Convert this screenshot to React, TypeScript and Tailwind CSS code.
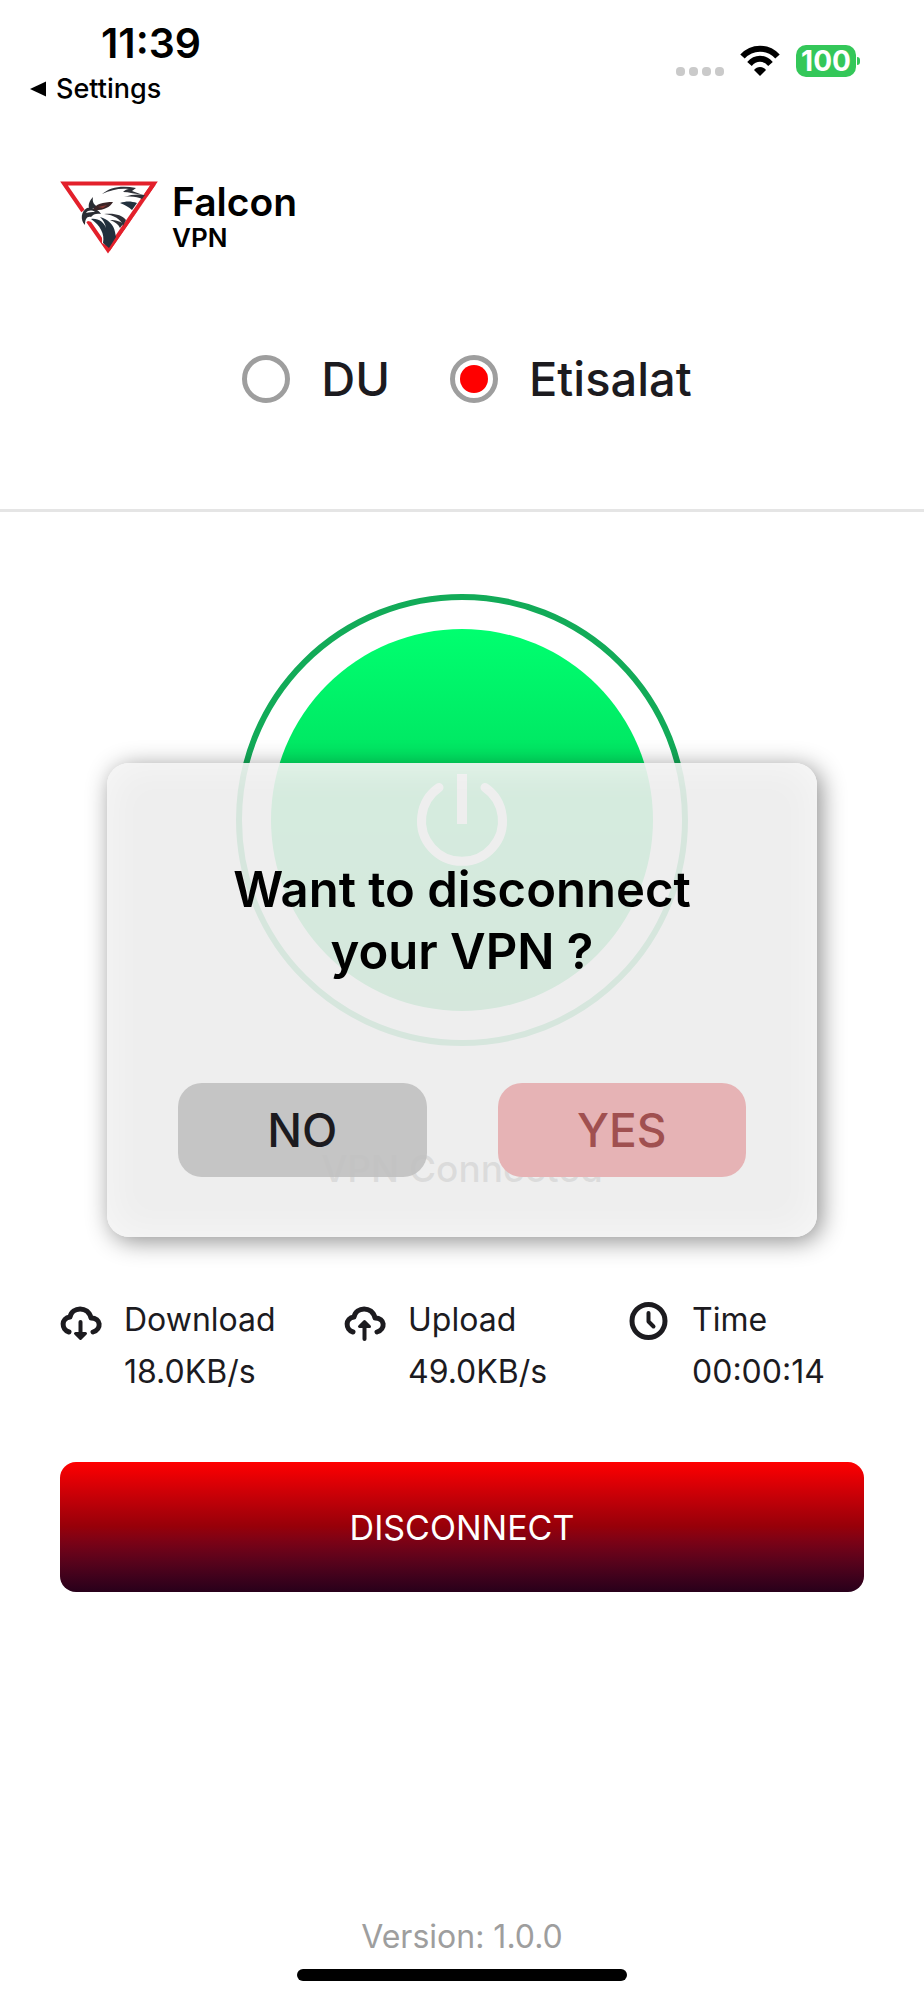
import { useState } from "react";

const STATS = [
  { id: "download", label: "Download", value: "18.0KB/s" },
  { id: "upload", label: "Upload", value: "49.0KB/s" },
  { id: "time", label: "Time", value: "00:00:14" },
];

const PROVIDERS = ["DU", "Etisalat"];

function WifiIcon() {
  return (
    <svg className="h-8 w-10" fill="none" stroke="#000" strokeWidth="6" viewBox="0 0 40 32">
      <title>Wi-Fi</title>
      <path d="M2.5 11.5C12 1 28 1 37.5 11.5" />
      <path d="M9.5 19C15.5 12 24.5 12 30.5 19" />
      <path d="M20 31l-6-6c3-4 9-4 12 0z" fill="#000" stroke="none" />
    </svg>
  );
}

function FalconLogo() {
  return (
    <svg className="h-[76px] w-[98px]" fill="none" viewBox="0 0 98 76">
      <title>Falcon VPN</title>
      <path d="M23 31L4 3.500h90L48 70 28 41" stroke="#e3202b" strokeWidth="4" />
      <path
        d="M25 29c1-5 4-9 9-12 9-7 26-13 45-8l9 8-38 50-8-4c1-9-3-16-10-21l-8-2c-2-5-1-8 1-11z"
        fill="#fff"
      />
      <path d="M94 3.500L48 70" stroke="#e3202b" strokeWidth="4" />
      {/* beak */}
      <path
        d="M25 45c-5-5-4-14 2-17 5-1 11 1 14 6-4-1-8 0-10 3-4-1-6 2-6 8z"
        fill="#2a2d33"
      />
      <path d="M26 33c2-3 6-3 9-1-3 0-6 0-9 1z" fill="#fff" />
      {/* brow and eye */}
      <path d="M29 28c-1-4 1-8 4-11-1 5 1 8 5 10l-3 1z" fill="#2a2d33" />
      <path d="M33 30c2-6 10-8 20-8-3 6-12 9-20 8z" fill="#3b2527" />
      <path d="M38 27l9-2-4 3z" fill="#8b3a35" />
      {/* neck feathers */}
      <path d="M31 39c7-1 13 3 15 9-1-5-3-8-6-11 8 2 14 8 15 15l1 5-7 11-6-5c2-9-3-18-12-24z" fill="#22303d" />
      <path d="M44 34c10 1 17 5 19 12l3-6c-4-5-11-7-22-6z" fill="#2e3138" />
      <path d="M50 40c5 2 8 4 10 8l3-4c-3-3-7-4-13-4z" fill="#2e3138" />
      <path d="M60 23c5 2 9 4 12 7l5-7c-6-2-11-2-17 0z" fill="#22303d" />
      <path d="M64 17c8-1 14 0 18 2l3-4c-6-1-13-1-21 2z" fill="#2e3138" />
      {/* crest */}
      <path d="M42 14c8-7 20-9 34-6l-4 3 11 4c-8-1-14-3-20-3 2-2 4-3 6-3-10-1-18 1-27 5z" fill="#2e3138" />
    </svg>
  );
}

function PowerIcon() {
  return (
    <svg className="h-24 w-24" fill="none" stroke="#fff" strokeWidth="9" viewBox="0 0 96 96">
      <title>Power</title>
      <path d="M25 15.5a40.5 40.5 0 1 0 46 0" strokeLinecap="round" />
      <path d="M48 2v50" strokeWidth="10" />
    </svg>
  );
}

function StatIcon({ id }: { id: string }) {
  return (
    <svg
      className="mt-2 h-10 w-11 shrink-0"
      fill="none"
      stroke="#1c1b1f"
      strokeLinecap="round"
      strokeLinejoin="round"
      strokeWidth="4"
      viewBox="0 0 44 40"
    >
      {id === "time" ? (
        <>
          <circle cx="20.5" cy="19" r="16.5" strokeWidth="5" />
          <path d="M20.5 11v8.500l5 5" />
        </>
      ) : (
        <path d="M9 30C1 27.500 1 16 10 15 12 4.500 28 3.500 31 16c10 0 11 11 2 14" strokeWidth="5" />
      )}
      {id === "download" && (
        <>
          <path d="M20.500 20v13" />
          <path d="M15.500 31.500h10l-5 5z" fill="#1c1b1f" strokeWidth="3" />
        </>
      )}
      {id === "upload" && (
        <>
          <path d="M20.500 37V23" />
          <path d="M15.500 24.500h10l-5-5z" fill="#1c1b1f" strokeWidth="3" />
        </>
      )}
    </svg>
  );
}

function StatusBar() {
  return (
    <div className="flex items-start justify-between pr-16 pl-7 text-black">
      <div className="pt-[23px]">
        <p className="pl-[73px] font-semibold text-[41px] leading-10">11:39</p>
        <button className="mt-[10px] flex items-center gap-2 font-medium text-[27px] leading-8" type="button">
          <svg className="h-4 w-5" viewBox="0 0 20 16">
            <path d="M2 8L18 0.5v15z" />
          </svg>
          Settings
        </button>
      </div>
      <div className="flex items-center pt-[45px]">
        <div className="mt-5 mr-4 flex gap-1">
          <span className="size-[9px] rounded-sm bg-[#cacaca]" />
          <span className="size-[9px] rounded-sm bg-[#cacaca]" />
          <span className="size-[9px] rounded-sm bg-[#cacaca]" />
          <span className="size-[9px] rounded-sm bg-[#cacaca]" />
        </div>
        <WifiIcon />
        <span className="ml-4 flex h-8 w-15 items-center justify-center rounded-[10px] bg-[#34c759] font-bold text-[28px] text-white">
          100
        </span>
        <span className="ml-px h-2 w-[3px] rounded-r-full bg-[#34c759]" />
      </div>
    </div>
  );
}

export default function App() {
  const [provider, setProvider] = useState("Etisalat");
  const [isDialogOpen, setIsDialogOpen] = useState(true);

  return (
    <div className="relative flex min-h-screen flex-col bg-white font-['Inter',sans-serif] text-[#1c1b1f]">
      <StatusBar />

      <header className="mt-[75px] flex items-center gap-[14px] px-[60px] text-black">
        <FalconLogo />
        <div>
          <h1 className="font-semibold text-[39px] leading-10">Falcon</h1>
          <p className="font-semibold text-[26px] leading-8">VPN</p>
        </div>
      </header>

      <fieldset className="mt-[93px] flex justify-center gap-[60px] border-[#e5e5e5] border-b-[3px] pb-[100px] pl-[10px]">
        {PROVIDERS.map((name) => (
          <label className="flex items-center gap-[31px] font-medium text-[47px] leading-[60px]" key={name}>
            <input
              checked={provider === name}
              className="size-12 appearance-none rounded-full border-[#9e9e9e] border-[5px] bg-clip-content p-[5px] checked:bg-[#ff0000]"
              name="provider"
              onChange={() => setProvider(name)}
              type="radio"
            />
            {name}
          </label>
        ))}
      </fieldset>

      <main className="flex flex-col px-[60px] pt-[82px]">
        <button
          aria-label="Toggle connection"
          className="self-center rounded-full border-[#12ab58] border-[6px] p-[29px]"
          onClick={() => setIsDialogOpen(true)}
          type="button"
        >
          <span className="flex size-[382px] items-center justify-center rounded-full bg-linear-to-b from-[#00ff6f] to-[#00b84c]">
            <PowerIcon />
          </span>
        </button>

        <p className="mt-[101px] text-center font-medium text-[37px] leading-[44px] text-[#444]">
          VPN Connected
        </p>

        <div className="mt-[103px] grid grid-cols-3 gap-12">
          {STATS.map((stat) => (
            <div className="flex gap-5" key={stat.id}>
              <StatIcon id={stat.id} />
              <div className="text-[32px] leading-[52px]">
                <p>{stat.label}</p>
                <p>{stat.value}</p>
              </div>
            </div>
          ))}
        </div>

        <button
          className="mt-16 h-[130px] rounded-2xl bg-linear-to-b from-[#ff0000] via-[#960009] to-[#28001a] text-[34px] text-white"
          onClick={() => setIsDialogOpen(true)}
          type="button"
        >
          DISCONNECT
        </button>
      </main>

      <footer className="mt-auto flex flex-col items-center pb-[19px]">
        <p className="text-[32px] leading-10 text-[#9e9e9e]">Version: 1.0.0</p>
        <div className="mt-3 h-3 w-[330px] rounded-full bg-black" />
      </footer>

      {isDialogOpen && (
        <div className="absolute inset-0 flex items-center justify-center px-[107px]">
          <div
            aria-labelledby="dialog-title"
            className="w-full rounded-[22px] bg-[#ececec]/90 px-[71px] pt-24 pb-[60px] shadow-[4px_4px_24px_rgba(0,0,0,0.45),inset_0_0_40px_rgba(255,255,255,0.6)]"
            role="dialog"
          >
            <h2
              className="text-center font-semibold text-[49px] leading-[62px] text-black"
              id="dialog-title"
            >
              Want to disconnect
              <br />
              your VPN ?
            </h2>
            <div className="mt-[100px] grid grid-cols-2 gap-[71px] font-medium text-[46px]">
              <button
                className="h-[94px] rounded-3xl bg-[#c0c0c0]/90"
                onClick={() => setIsDialogOpen(false)}
                type="button"
              >
                NO
              </button>
              <button
                className="h-[94px] rounded-3xl bg-[#e6b3b5] text-[#a05050]"
                onClick={() => setIsDialogOpen(false)}
                type="button"
              >
                YES
              </button>
            </div>
          </div>
        </div>
      )}
    </div>
  );
}
